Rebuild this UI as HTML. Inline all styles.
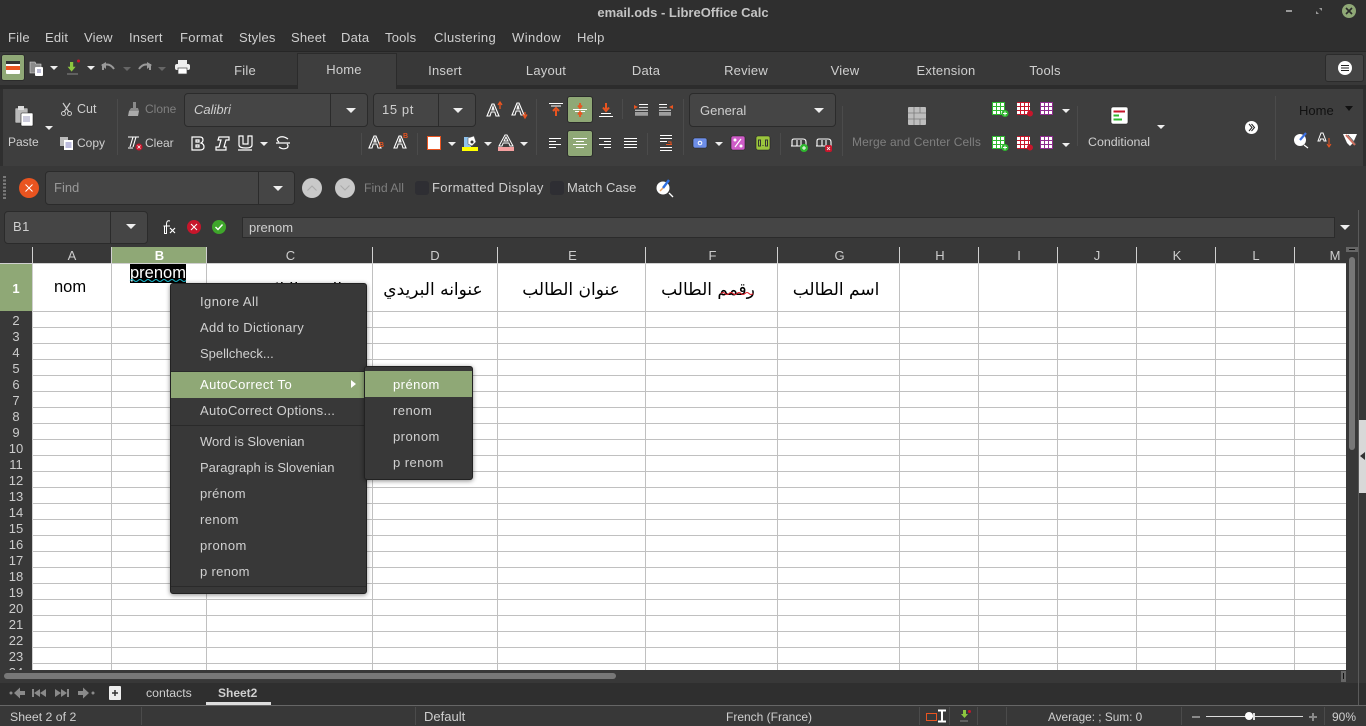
<!DOCTYPE html>
<html lang="fr"><head><meta charset="utf-8"><title>email.ods - LibreOffice Calc</title>
<style>
html,body{margin:0;padding:0;width:1366px;height:726px;overflow:hidden;background:#2f2f2f}
body{position:relative;font-family:"Liberation Sans","DejaVu Sans",sans-serif;font-size:13px;color:#cfcfcf}
.a{position:absolute}
.t{position:absolute;white-space:nowrap;line-height:16px}
.c{transform:translateX(-50%)}
.dim{color:#7f7f7f}
.sep{position:absolute;width:1px;background:#4b4b4b}
.box{position:absolute;box-sizing:border-box;background:#454545;border:1px solid #2b2b2b;border-radius:4px}
.div{position:absolute;top:0;bottom:0;width:1px;background:#2b2b2b}
.ar{position:absolute;width:0;height:0;border-left:5px solid transparent;border-right:5px solid transparent;border-top:5px solid #eee}
.ard{position:absolute;width:0;height:0;border-left:4px solid transparent;border-right:4px solid transparent;border-top:4px solid #666}
.grn{position:absolute;box-sizing:border-box;background:#8fa876;border:1px solid #2b2b2b;border-radius:3px}
svg{position:absolute;overflow:visible}
.m{letter-spacing:.2px}
.s{font-size:12.3px}
.ch{position:absolute;top:248px;height:15px;line-height:15px;text-align:center;color:#ccc;font-size:13px}
.cs{position:absolute;top:247px;height:16px;width:1px;background:#d0d0d0}
.rh{position:absolute;left:0;width:32px;text-align:center;color:#ccc;font-size:13px;line-height:15px;height:15px}
.cl{position:absolute;top:264px;height:406px;width:1px;background:#c0c0c0}
.ct{position:absolute;white-space:nowrap;color:#000;font-size:17px;line-height:24px;top:278px;font-family:"DejaVu Sans",sans-serif;direction:rtl;transform:translateX(-50%)}
.mi{position:absolute;left:29px;white-space:nowrap;line-height:16px;color:#d0d0d0;letter-spacing:.3px}
.ms{position:absolute;left:28px;white-space:nowrap;line-height:16px;color:#d0d0d0;letter-spacing:.45px}
</style></head><body>

<!-- Title / menu -->
<div class="a" style="left:0;top:0;width:1366px;height:51px;background:#2f2f2f"></div>
<div class="t c" style="left:683px;top:5px;font-weight:bold;color:#c4c4c4;font-size:13px">email.ods - LibreOffice Calc</div>
<div class="a" style="left:1286px;top:10px;width:6px;height:2px;background:#9a9a9a"></div>
<svg style="left:1316px;top:8px" width="7" height="7"><path d="M3 0H6V3ZM0 3L3 6H0Z" fill="#9a9a9a"/></svg>
<div class="a" style="left:1342px;top:4px;width:14px;height:14px;border-radius:50%;background:#8fa876"></div>
<svg style="left:1346px;top:8px" width="6" height="6"><path d="M0 0L6 6M6 0L0 6" stroke="#2a2a2a" stroke-width="1.600"/></svg>

<div class="t m" style="left:8px;top:30px">File</div>
<div class="t m" style="left:45px;top:30px">Edit</div>
<div class="t m" style="left:84px;top:30px">View</div>
<div class="t m" style="left:129px;top:30px">Insert</div>
<div class="t m" style="left:180px;top:30px;letter-spacing:.35px">Format</div>
<div class="t m" style="left:239px;top:30px">Styles</div>
<div class="t m" style="left:291px;top:30px">Sheet</div>
<div class="t m" style="left:341px;top:30px">Data</div>
<div class="t m" style="left:385px;top:30px">Tools</div>
<div class="t m" style="left:434px;top:30px;letter-spacing:.35px">Clustering</div>
<div class="t m" style="left:512px;top:30px;letter-spacing:.45px">Window</div>
<div class="t m" style="left:577px;top:30px">Help</div>

<!-- Tab bar -->
<div class="a" style="left:0;top:51px;width:1366px;height:1px;background:#262626"></div>
<div class="a" style="left:0;top:52px;width:1366px;height:33px;background:#383838"></div>
<div class="a" style="left:0;top:85px;width:1366px;height:4px;background:#2c2c2c"></div>
<div class="a" style="left:297px;top:53px;width:100px;height:36px;background:#3e3e3e;border:1px solid #2b2b2b;border-bottom:0;box-sizing:border-box"></div>
<div class="t c m" style="left:245px;top:63px">File</div>
<div class="t c m" style="left:344px;top:62px">Home</div>
<div class="t c m" style="left:445px;top:63px">Insert</div>
<div class="t c m" style="left:546px;top:63px">Layout</div>
<div class="t c m" style="left:646px;top:63px">Data</div>
<div class="t c m" style="left:746px;top:63px">Review</div>
<div class="t c m" style="left:845px;top:63px">View</div>
<div class="t c m" style="left:946px;top:63px">Extension</div>
<div class="t c m" style="left:1045px;top:63px">Tools</div>
<div class="a" style="left:1325px;top:54px;width:39px;height:28px;box-sizing:border-box;background:#454545;border:1px solid #2b2b2b;border-radius:3px"></div>
<div class="a" style="left:1338px;top:61px;width:14px;height:14px;border-radius:50%;background:#fff"></div>
<svg style="left:1341px;top:65px" width="8" height="6"><path d="M0 .5H8M0 3H8M0 5.500H8" stroke="#222" stroke-width="1"/></svg>

<!-- Quick toolbar -->
<div class="grn" style="left:1px;top:54px;width:24px;height:27px"></div>
<svg style="left:6px;top:61px" width="14" height="13"><rect width="14" height="13" rx="1" fill="#fff"/><rect width="14" height="3" fill="#333"/><rect y="5" width="14" height="4" fill="#e95420"/></svg>
<svg style="left:29px;top:61px" width="15" height="15"><path d="M1 1H6L7 3H12V12H1Z" fill="#8a8a8a" stroke="#ddd" stroke-width=".6"/><rect x="6" y="6" width="8" height="9" rx="1" fill="#fff"/><path d="M8 9H12M8 11H12" stroke="#77a" /></svg>
<div class="ar" style="left:50px;top:66px;border-left-width:4px;border-right-width:4px;border-top-width:4px"></div>
<svg style="left:66px;top:60px" width="16" height="16"><path d="M5 0H9V6H12L7 12L2 6H5Z" fill="#8cc63f" transform="translate(0,2) scale(.8)"/><path d="M1 14H12" stroke="#888"/><circle cx="12.500" cy="1" r="1.500" fill="#c7162b"/></svg>
<div class="ar" style="left:87px;top:66px;border-left-width:4px;border-right-width:4px;border-top-width:4px"></div>
<svg style="left:101px;top:62px" width="15" height="10"><path d="M2 8V3H3Q9 1 13 7" fill="none" stroke="#9a9a9a" stroke-width="2"/><path d="M0 3L5 0V7Z" fill="#9a9a9a"/></svg>
<div class="ard" style="left:123px;top:67px"></div>
<svg style="left:137px;top:62px" width="15" height="10"><path d="M13 8V3H12Q6 1 2 7" fill="none" stroke="#9a9a9a" stroke-width="2"/><path d="M15 3L10 0V7Z" fill="#9a9a9a"/></svg>
<div class="ard" style="left:158px;top:67px"></div>
<svg style="left:175px;top:60px" width="15" height="14"><rect x="3" y="0" width="9" height="4" fill="#eee"/><rect x="0" y="4" width="15" height="6" rx="2" fill="#eee"/><rect x="3" y="8" width="9" height="6" fill="#fff" stroke="#444" stroke-width=".7"/></svg>

<!-- Ribbon -->
<div class="a" style="left:3px;top:89px;width:1360px;height:77px;background:#3e3e3e"></div>
<svg style="left:15px;top:106px" width="18" height="20"><rect x="0" y="2" width="13" height="15" rx="1" fill="#bbb" stroke="#333" stroke-width=".6"/><rect x="3" y="0" width="6" height="4" fill="#ddd"/><rect x="6" y="7" width="12" height="13" rx="1" fill="#fff" stroke="#222" stroke-width=".6"/><path d="M8 11H15M8 13H15M8 15H15" stroke="#99b" /></svg>
<div class="ar" style="left:45px;top:126px;border-left-width:4px;border-right-width:4px;border-top-width:4px"></div>
<div class="t" style="left:8px;top:134px;font-size:12px">Paste</div>
<svg style="left:61px;top:103px" width="11" height="13"><path d="M2 0L8 9M9 0L3 9" stroke="#ccc" stroke-width="1.200"/><circle cx="2.500" cy="10.500" r="2" fill="none" stroke="#ccc"/><circle cx="8.500" cy="10.500" r="2" fill="none" stroke="#ccc"/></svg>
<div class="t" style="left:77px;top:101px;font-size:12.500px">Cut</div>
<svg style="left:60px;top:137px" width="13" height="13"><rect x="0" y="0" width="8" height="9" fill="#bbb"/><rect x="4" y="3" width="9" height="10" fill="#fff"/><path d="M5.500 6H11.500M5.500 8H11.500M5.500 10H11.500" stroke="#77b"/></svg>
<div class="t" style="left:77px;top:135px;font-size:12px">Copy</div>
<div class="sep" style="left:117px;top:99px;height:56px"></div>
<svg style="left:128px;top:102px" width="12" height="15"><path d="M5 0H8V6H10L11 9H1L3 6H5Z" fill="#8a8a8a"/><path d="M1 9H11L10 14H0Z" fill="#aaa"/></svg>
<div class="t dim" style="left:145px;top:101px;font-size:12px">Clone</div>
<svg style="left:127px;top:136px" width="16" height="15"><path d="M1 1H12M6 1L3 11M1 12H6M9 1L6 11" fill="none" stroke="#fff" stroke-width="1.100"/><circle cx="12" cy="11" r="3.500" fill="#c7162b"/><path d="M10.500 9.500L13.500 12.500M13.500 9.500L10.500 12.500" stroke="#fff" stroke-width=".8"/></svg>
<div class="t" style="left:145px;top:135px;font-size:12px">Clear</div>

<div class="box" style="left:184px;top:93px;width:184px;height:34px"><div class="div" style="left:145px"></div></div>
<div class="t" style="left:194px;top:102px;font-style:italic">Calibri</div>
<div class="ar" style="left:346px;top:108px"></div>
<div class="box" style="left:373px;top:93px;width:103px;height:34px"><div class="div" style="left:64px"></div></div>
<div class="t" style="left:382px;top:102px;letter-spacing:.6px">15 pt</div>
<div class="ar" style="left:453px;top:108px"></div>

<svg style="left:191px;top:136px" width="100" height="15" fill="none" stroke="#fff" stroke-width="1.200">
<path d="M1 1H9Q12 1 12 4Q12 6 10 7Q13 8 13 11Q13 14 9 14H1ZM5 4V6H8V4ZM5 9V11H8V9Z"/>
<path d="M28 1H38V4H35L33 11H35V14H25V11H28L30 4H27Z"/>
<path d="M48 0H52V8H57V0H61V9Q61 12 55 12Q48 12 48 9ZM47 14H61"/>
<path d="M97 3Q93 0 89 1Q84 3 88 6M88 11Q92 14 96 12Q98 10 96 8M85 7H99"/>
</svg>
<div class="ar" style="left:260px;top:142px;border-left-width:4px;border-right-width:4px;border-top-width:4px"></div>
<div class="sep" style="left:361px;top:133px;height:22px"></div>
<svg style="left:368px;top:135px" width="42" height="17" fill="none" stroke="#fff" stroke-width="1.100"><path d="M1 13L6 1H8L13 13H10L8.800 9H5.200L4 13ZM6 7H8L7 3.500Z"/><path d="M26 13L31 1H33L38 13H35L33.800 9H30.200L29 13ZM31 7H33L32 3.500Z"/></svg>
<div class="t" style="left:379px;top:142px;font-size:7px;line-height:8px;color:#e95420;font-weight:bold">B</div>
<div class="t" style="left:403px;top:133px;font-size:7px;line-height:8px;color:#e95420;font-weight:bold">B</div>
<div class="sep" style="left:417px;top:133px;height:22px"></div>
<div class="a" style="left:427px;top:136px;width:14px;height:14px;box-sizing:border-box;background:#fff;border:1px solid #e95420;outline:0"></div>
<div class="ar" style="left:448px;top:142px;border-left-width:4px;border-right-width:4px;border-top-width:4px"></div>
<svg style="left:462px;top:136px" width="16" height="15"><rect x="2" y="1" width="7" height="10" fill="#8fc3ee"/><path d="M6 2L12 0L14 6L10 10L6 8Z" fill="#fff" stroke="#555" stroke-width=".6"/><circle cx="10" cy="6" r="1.500" fill="#333"/><rect y="11" width="16" height="4" fill="#ffff00"/></svg>
<div class="ar" style="left:484px;top:142px;border-left-width:4px;border-right-width:4px;border-top-width:4px"></div>
<svg style="left:498px;top:135px" width="16" height="16"><path d="M1 11L7 0H9L15 11H12L10.800 8H5.200L4 11ZM6 6H10L8 2Z" fill="none" stroke="#fff" stroke-width="1"/><rect y="12" width="16" height="4" fill="#f4a0a0"/></svg>
<div class="ar" style="left:520px;top:142px;border-left-width:4px;border-right-width:4px;border-top-width:4px"></div>

<svg style="left:487px;top:101px" width="42" height="17" fill="none" stroke="#fff" stroke-width="1.100"><path d="M0 15L5 3H7L12 15H9L7.800 11H4.200L3 15ZM5 9H7L6 5.500Z"/><path d="M25 14L30 2H32L37 14H34L32.800 10H29.200L28 14ZM30 8H32L31 4.500Z"/><path d="M13 8V2M11 4L13 1L15 4" stroke="#e95420" stroke-width="1.300"/><path d="M38 11V16M36 13.500L38 17L40 13.500" stroke="#e95420" stroke-width="1.300"/></svg>
<div class="sep" style="left:536px;top:99px;height:56px"></div>

<svg style="left:548px;top:103px" width="16" height="14"><path d="M1 .5H15M3 3H13" stroke="#fff"/><path d="M8 13V7M5 8L8 5L11 8" stroke="#e95420" stroke-width="2" fill="none"/></svg>
<div class="grn" style="left:567px;top:96px;width:26px;height:27px"></div>
<svg style="left:572px;top:102px" width="16" height="16"><path d="M1 7.500H15M3 9.500H13" stroke="#fff"/><path d="M8 1V5M6 3.500L8 6L10 3.500M8 15V11M6 12.500L8 10L10 12.500" stroke="#e95420" stroke-width="1.800" fill="none"/></svg>
<svg style="left:598px;top:102px" width="16" height="15"><path d="M8 1V7M5 5.500L8 9L11 5.500" stroke="#e95420" stroke-width="2" fill="none"/><path d="M3 11.500H13M1 14.500H15" stroke="#fff"/></svg>

<svg style="left:634px;top:104px" width="40" height="12"><path d="M5 .5H14M5 3.500H14M1 6.500H14M1 9.500H14M1 11.500H14" stroke="#fff" transform="scale(1,.95)"/><path d="M0 1L4 3L0 5Z" fill="#e95420"/><path d="M25 .5H33M25 3.500H33M25 6.500H37M25 9.500H37M25 11.500H37" stroke="#fff" transform="scale(1,.95)"/><path d="M39 1L35 3L39 5Z" fill="#e95420"/></svg>
<div class="sep" style="left:622px;top:99px;height:20px"></div>
<div class="sep" style="left:683px;top:99px;height:56px"></div>

<svg style="left:549px;top:138px" width="13" height="11"><path d="M0 .5H12M0 3.500H7M0 6.500H12M0 9.500H7" stroke="#fff" /></svg>
<div class="grn" style="left:567px;top:130px;width:26px;height:27px"></div>
<svg style="left:573px;top:138px" width="14" height="11"><path d="M0 .5H14M3 3.500H11M0 6.500H14M3 9.500H11" stroke="#fff"/></svg>
<svg style="left:598px;top:138px" width="13" height="11"><path d="M1 .5H13M6 3.500H13M1 6.500H13M6 9.500H13" stroke="#fff"/></svg>
<svg style="left:624px;top:138px" width="13" height="11"><path d="M0 .5H13M0 3.500H13M0 6.500H13M0 9.500H13" stroke="#fff"/></svg>
<div class="sep" style="left:647px;top:133px;height:22px"></div>
<svg style="left:659px;top:135px" width="14" height="16"><path d="M1 .5H13M1 3.500H13M1 6.500H8M1 12.500H13M1 15.500H13" stroke="#fff"/><path d="M9 7H12V9.500M7 9.500H13" stroke="#e95420" fill="none"/></svg>

<div class="box" style="left:689px;top:93px;width:147px;height:34px"></div>
<div class="t" style="left:700px;top:103px">General</div>
<div class="ar" style="left:814px;top:108px"></div>
<svg style="left:693px;top:138px" width="14" height="10"><rect width="14" height="10" rx="2" fill="#6d8ee8" stroke="#222" stroke-width=".6"/><circle cx="7" cy="5" r="1.800" fill="none" stroke="#fff"/></svg>
<div class="ar" style="left:715px;top:142px;border-left-width:4px;border-right-width:4px;border-top-width:4px"></div>
<svg style="left:731px;top:136px" width="14" height="14"><rect width="14" height="14" rx="2" fill="#cf5cc8" stroke="#222" stroke-width=".6"/><path d="M10 3L4 11" stroke="#fff" stroke-width="1.200"/><circle cx="4" cy="4" r="1.500" fill="#fff"/><circle cx="10" cy="10" r="1.500" fill="#fff"/></svg>
<svg style="left:756px;top:136px" width="14" height="14"><rect width="14" height="14" rx="2" fill="#9bc53d" stroke="#222" stroke-width=".6"/><path d="M2.500 4H4.500V10H2.500ZM9.500 4H11.500V10H9.500Z" fill="none" stroke="#333"/><rect x="6.500" y="9" width="1" height="1" fill="#333"/></svg>
<div class="sep" style="left:780px;top:133px;height:22px"></div>
<svg style="left:791px;top:137px" width="42" height="15"><g fill="none" stroke="#fff" stroke-width="1.100"><path d="M1 9V4Q1 2 3 2H12Q15 2 15 5V9M0 9H16M6 3V9M10 3V9"/><path d="M26 9V4Q26 2 28 2H37Q40 2 40 5V9M25 9H41M31 3V9M35 3V9"/></g><circle cx="13" cy="11" r="4" fill="#2eb82e"/><path d="M11 11H15M13 9V13" stroke="#fff"/><rect x="34" y="8" width="7" height="7" rx="2" fill="#c7162b"/><path d="M36 10L39 13M39 10L36 13" stroke="#fff" stroke-width=".8"/></svg>
<div class="sep" style="left:842px;top:106px;height:50px"></div>
<svg style="left:908px;top:107px" width="18" height="18"><rect width="18" height="18" rx="1" fill="#bdbdbd"/><path d="M0 6H18M0 12H18M6 0V6M12 0V6M6 12V18M12 12V18M6 6V12" stroke="#7a7a7a" stroke-width=".8"/></svg>
<div class="t dim" style="left:852px;top:134px;font-size:12px;letter-spacing:.1px">Merge and Center Cells</div>

<svg width="0" height="0"><defs>
<pattern id="gw" width="4" height="4" patternUnits="userSpaceOnUse"><rect x="1" y="1" width="3" height="3" fill="#fff"/></pattern>
</defs></svg>
<svg style="left:992px;top:102px" width="62" height="15"><rect width="13" height="13" fill="#2eb82e"/><rect width="13" height="13" fill="url(#gw)"/><circle cx="13" cy="11.500" r="3.500" fill="#2eb82e"/><path d="M11 11.500H15M13 9.500V13.500" stroke="#fff"/><rect x="25" width="13" height="13" fill="#c7162b"/><rect x="25" width="13" height="13" fill="url(#gw)"/><circle cx="38" cy="11.500" r="3" fill="#c7162b"/><rect x="48" width="13" height="13" fill="#8e2c8e"/><rect x="48" width="13" height="13" fill="url(#gw)"/></svg>
<svg style="left:992px;top:136px" width="62" height="15"><rect width="13" height="13" fill="#2eb82e"/><rect width="13" height="13" fill="url(#gw)"/><circle cx="13" cy="11.500" r="3.500" fill="#2eb82e"/><path d="M11 11.500H15M13 9.500V13.500" stroke="#fff"/><rect x="25" width="13" height="13" fill="#c7162b"/><rect x="25" width="13" height="13" fill="url(#gw)"/><circle cx="38" cy="11.500" r="3" fill="#c7162b"/><rect x="48" width="13" height="13" fill="#8e2c8e"/><rect x="48" width="13" height="13" fill="url(#gw)"/></svg>
<div class="ar" style="left:1062px;top:109px;border-left-width:4px;border-right-width:4px;border-top-width:4px"></div>
<div class="ar" style="left:1062px;top:143px;border-left-width:4px;border-right-width:4px;border-top-width:4px"></div>
<div class="sep" style="left:1077px;top:106px;height:40px"></div>
<svg style="left:1111px;top:107px" width="17" height="17"><rect width="17" height="17" rx="2" fill="#fff" stroke="#222" stroke-width=".6"/><path d="M2.500 4.500H14" stroke="#c7162b" stroke-width="2"/><path d="M2.500 8.500H8M2.500 12.500H11" stroke="#2eb82e" stroke-width="2"/></svg>
<div class="t" style="left:1088px;top:134px;font-size:12.400px">Conditional</div>
<div class="ar" style="left:1157px;top:125px;border-left-width:4px;border-right-width:4px;border-top-width:4px"></div>
<div class="a" style="left:1245px;top:121px;width:13px;height:13px;border-radius:50%;background:#fff"></div>
<svg style="left:1248px;top:124px" width="7" height="7"><path d="M1 0L4 3.500L1 7M3.500 0L6.500 3.500L3.500 7" fill="none" stroke="#222"/></svg>
<div class="sep" style="left:1275px;top:96px;height:64px"></div>
<div class="t" style="left:1299px;top:103px;color:#111">Home</div>
<div class="a" style="left:1345px;top:106px;width:0;height:0;border-left:4px solid transparent;border-right:4px solid transparent;border-top:5px solid #111"></div>
<svg style="left:1293px;top:132px" width="16" height="16"><circle cx="7" cy="8" r="6" fill="#fff"/><path d="M13 1L7 8" stroke="#3b6fe0" stroke-width="2.200"/><path d="M11 13L15 16" stroke="#fff" stroke-width="1.200"/></svg>
<svg style="left:1317px;top:132px" width="15" height="16"><path d="M1 9L4 1H6L9 9H7L6.500 7H3.500L3 9Z" fill="none" stroke="#fff"/><path d="M12 6V14M10 12L12 15L14 12" stroke="#e95420" fill="none"/></svg>
<svg style="left:1343px;top:133px" width="15" height="14"><path d="M0 1H14L10 10L7 13L4 10Z" fill="#fff"/><path d="M3 2L12 12" stroke="#d07060" stroke-width="2"/><path d="M5 2L13 11" stroke="#555" stroke-width=".8"/></svg>

<!-- Find bar -->
<div class="a" style="left:0;top:166px;width:1366px;height:44px;background:#383838"></div>
<svg style="left:3px;top:176px" width="3" height="24"><path d="M1.500 0V24" stroke="#7a7a7a" stroke-width="3" stroke-dasharray="2 1.500"/></svg>
<div class="a" style="left:19px;top:178px;width:20px;height:20px;border-radius:50%;background:#e95420"></div>
<svg style="left:25px;top:184px" width="8" height="8"><path d="M.5 .5L7.500 7.500M7.500 .5L.5 7.500" stroke="#fff"/></svg>
<div class="box" style="left:45px;top:171px;width:250px;height:34px"><div class="div" style="left:212px"></div></div>
<div class="t" style="left:54px;top:180px;color:#999">Find</div>
<div class="ar" style="left:273px;top:186px"></div>
<div class="a" style="left:302px;top:178px;width:20px;height:20px;border-radius:50%;background:#c9c9c9"></div>
<svg style="left:307px;top:185px" width="10" height="6"><path d="M.5 5.500L5 1L9.500 5.500" fill="none" stroke="#aaa"/></svg>
<div class="a" style="left:335px;top:178px;width:20px;height:20px;border-radius:50%;background:#c9c9c9"></div>
<svg style="left:340px;top:185px" width="10" height="6"><path d="M.5 .5L5 5L9.500 .5" fill="none" stroke="#aaa"/></svg>
<div class="t dim" style="left:364px;top:180px;font-size:12.200px">Find All</div>
<div class="a" style="left:415px;top:181px;width:14px;height:14px;border-radius:3px;background:#2e2e33"></div>
<div class="t" style="left:432px;top:180px;letter-spacing:.37px">Formatted Display</div>
<div class="a" style="left:550px;top:181px;width:14px;height:14px;border-radius:3px;background:#2e2e33"></div>
<div class="t" style="left:567px;top:180px">Match Case</div>
<svg style="left:656px;top:179px" width="20" height="19"><circle cx="7" cy="9" r="6.500" fill="#fff"/><path d="M13 1L7 9" stroke="#2f6fe0" stroke-width="2.400"/><path d="M7 9L4 12" stroke="#e8a060" stroke-width="1.500"/><path d="M13 14L17 18" stroke="#fff" stroke-width="1.300"/></svg>

<!-- Formula bar -->
<div class="a" style="left:0;top:210px;width:1366px;height:37px;background:#383838"></div>
<div class="box" style="left:4px;top:211px;width:144px;height:33px"><div class="div" style="left:105px"></div></div>
<div class="t" style="left:13px;top:219px;letter-spacing:.5px">B1</div>
<div class="ar" style="left:126px;top:224px"></div>
<svg style="left:163px;top:220px" width="14" height="15" fill="none" stroke="#fff" stroke-width="1"><path d="M7 1Q3.500 0 3.500 4V13.500H1.500V6H0.500M1 6H7"/><path d="M7 8L12 13M12 8L7 13" stroke-width="1.200"/></svg>
<div class="a" style="left:187px;top:220px;width:14px;height:14px;border-radius:50%;background:#c7162b"></div>
<svg style="left:191px;top:224px" width="6" height="6"><path d="M0 0L6 6M6 0L0 6" stroke="#fff"/></svg>
<div class="a" style="left:212px;top:220px;width:14px;height:14px;border-radius:50%;background:#3fa62b"></div>
<svg style="left:215px;top:224px" width="8" height="6"><path d="M.5 3L3 5.500L7.500 .5" fill="none" stroke="#fff" stroke-width="1.400"/></svg>
<div class="a" style="left:242px;top:217px;width:1093px;height:21px;box-sizing:border-box;background:#454545;border:1px solid #2b2b2b"></div>
<div class="t" style="left:249px;top:220px">prenom</div>
<div class="ar" style="left:1340px;top:225px"></div>

<!-- Grid -->
<div class="a" style="left:0;top:247px;width:1366px;height:436px;background:#383838"></div>
<div class="a" style="left:33px;top:264px;width:1313px;height:406px;background:#fff"></div>
<div class="a" style="left:33px;top:311px;width:1313px;height:1px;background:#c0c0c0"></div>
<div class="a" style="left:33px;top:312px;width:1313px;height:358px;background:repeating-linear-gradient(to bottom,transparent 0,transparent 15px,#c0c0c0 15px,#c0c0c0 16px)"></div>
<div class="cl" style="left:111px"></div><div class="cl" style="left:206px"></div><div class="cl" style="left:372px"></div><div class="cl" style="left:497px"></div><div class="cl" style="left:645px"></div><div class="cl" style="left:777px"></div><div class="cl" style="left:899px"></div><div class="cl" style="left:978px"></div><div class="cl" style="left:1057px"></div><div class="cl" style="left:1136px"></div><div class="cl" style="left:1215px"></div><div class="cl" style="left:1294px"></div>

<div class="a" style="left:111px;top:247px;width:96px;height:16px;background:#8fa876"></div>
<div class="a" style="left:0;top:264px;width:33px;height:47px;background:#8fa876"></div>
<div class="a" style="left:0;top:263px;width:1346px;height:1px;background:#d0d0d0"></div>
<div class="cs" style="left:32px"></div><div class="cs" style="left:111px"></div><div class="cs" style="left:206px"></div><div class="cs" style="left:372px"></div><div class="cs" style="left:497px"></div><div class="cs" style="left:645px"></div><div class="cs" style="left:777px"></div><div class="cs" style="left:899px"></div><div class="cs" style="left:978px"></div><div class="cs" style="left:1057px"></div><div class="cs" style="left:1136px"></div><div class="cs" style="left:1215px"></div><div class="cs" style="left:1294px"></div>
<div class="ch" style="left:33px;width:78px">A</div>
<div class="ch" style="left:112px;width:95px;color:#fff;font-weight:bold">B</div>
<div class="ch" style="left:208px;width:165px">C</div>
<div class="ch" style="left:373px;width:124px">D</div>
<div class="ch" style="left:499px;width:147px">E</div>
<div class="ch" style="left:647px;width:131px">F</div>
<div class="ch" style="left:779px;width:121px">G</div>
<div class="ch" style="left:901px;width:78px">H</div>
<div class="ch" style="left:980px;width:78px">I</div>
<div class="ch" style="left:1058px;width:78px">J</div>
<div class="ch" style="left:1138px;width:78px">K</div>
<div class="ch" style="left:1217px;width:78px">L</div>
<div class="ch" style="left:1296px;width:78px">M</div>
<div class="a" style="left:32px;top:264px;width:1px;height:406px;background:#d0d0d0"></div>

<div class="rh" style="top:281px;color:#fff;font-weight:bold">1</div>
<div class="rh" style="top:313px">2</div><div class="rh" style="top:329px">3</div><div class="rh" style="top:345px">4</div><div class="rh" style="top:361px">5</div><div class="rh" style="top:377px">6</div><div class="rh" style="top:393px">7</div><div class="rh" style="top:409px">8</div><div class="rh" style="top:425px">9</div><div class="rh" style="top:441px">10</div><div class="rh" style="top:457px">11</div><div class="rh" style="top:473px">12</div><div class="rh" style="top:489px">13</div><div class="rh" style="top:505px">14</div><div class="rh" style="top:521px">15</div><div class="rh" style="top:537px">16</div><div class="rh" style="top:553px">17</div><div class="rh" style="top:569px">18</div><div class="rh" style="top:585px">19</div><div class="rh" style="top:601px">20</div><div class="rh" style="top:617px">21</div><div class="rh" style="top:633px">22</div><div class="rh" style="top:649px">23</div>
<div class="a" style="left:0;top:665px;width:32px;height:5px;overflow:hidden;text-align:center;color:#ccc;line-height:15px">24</div>
<div class="a" style="left:0;top:670px;width:1346px;height:1px;background:#383838"></div>

<div class="t" style="left:54px;top:277px;font-size:16.500px;line-height:20px;color:#000">nom</div>
<div class="a" style="left:130px;top:264px;width:56px;height:19px;background:#000"></div>
<div class="t" style="left:130px;top:263px;font-size:16.500px;line-height:20px;color:#fff">prenom</div>
<svg style="left:130px;top:279px" width="56" height="3"><path d="M0 1.500Q2 -.5 4 1.500T8 1.500T12 1.500T16 1.500T20 1.500T24 1.500T28 1.500T32 1.500T36 1.500T40 1.500T44 1.500T48 1.500T52 1.500T56 1.500" fill="none" stroke="#19b6c9"/></svg>
<div class="ct" style="left:285px">البريد الالكتروني</div>
<div class="ct" style="left:433px">عنوانه البريدي</div>
<div class="ct" style="left:571px">عنوان الطالب</div>
<div class="ct" style="left:708px">رقمم الطالب</div>
<svg style="left:721px;top:292px" width="34" height="3"><path d="M0 1.500Q2 -.5 4 1.500T8 1.500T12 1.500T16 1.500T20 1.500T24 1.500T28 1.500T32 1.500" fill="none" stroke="#e0202a"/></svg>
<div class="ct" style="left:836px">اسم الطالب</div>

<!-- vertical scrollbar / sidebar -->
<div class="a" style="left:1346px;top:247px;width:12px;height:5px;background:#666"></div>
<div class="a" style="left:1349px;top:249px;width:6px;height:1px;background:#111"></div>
<div class="a" style="left:1349px;top:257px;width:6px;height:193px;border-radius:3px;background:#777"></div>
<div class="a" style="left:1358px;top:210px;width:1px;height:495px;background:#5a5a5a"></div>
<div class="a" style="left:1359px;top:420px;width:7px;height:73px;background:#d8d8d8"></div>
<div class="a" style="left:1360px;top:452px;width:0;height:0;border-top:4px solid transparent;border-bottom:4px solid transparent;border-right:5px solid #333"></div>

<!-- horizontal scrollbar -->
<div class="a" style="left:4px;top:673px;width:612px;height:6px;border-radius:3px;background:#777"></div>
<div class="a" style="left:1341px;top:671px;width:5px;height:11px;background:#666"></div>
<div class="a" style="left:1343px;top:673px;width:1px;height:6px;background:#111"></div>

<!-- sheet tabs -->
<svg style="left:9px;top:686px" width="88" height="14" fill="#8a8a8a"><circle cx="2" cy="7" r="1.500"/><path d="M5 7L11 1.500V5H16V9H11V12.500Z"/><rect x="23" y="3" width="2" height="8"/><path d="M25 7L31 3V11ZM31 7L37 3V11Z"/><path d="M46 3L52 7L46 11ZM52 3L58 7L52 11Z"/><rect x="58" y="3" width="2" height="8"/><path d="M80 7L74 1.500V5H69V9H74V12.500Z"/><circle cx="84" cy="7" r="1.500"/></svg>
<div class="a" style="left:109px;top:686px;width:12px;height:14px;background:#eee;border-radius:1px"></div>
<svg style="left:112px;top:690px" width="6" height="6"><path d="M3 0V6M0 3H6" stroke="#333" stroke-width="1.500"/></svg>
<div class="t" style="left:146px;top:685px;font-size:12.300px">contacts</div>
<div class="t" style="left:218px;top:685px;font-weight:bold;font-size:12px">Sheet2</div>
<div class="a" style="left:206px;top:702px;width:65px;height:3px;background:#ddd"></div>

<!-- status bar -->
<div class="a" style="left:0;top:705px;width:1366px;height:1px;background:#666"></div>
<div class="a" style="left:0;top:706px;width:1366px;height:20px;background:#383838"></div>
<div class="t s" style="left:10px;top:709px">Sheet 2 of 2</div>
<div class="sep" style="left:141px;top:707px;height:18px"></div>
<div class="sep" style="left:415px;top:707px;height:18px"></div>
<div class="t" style="left:424px;top:709px">Default</div>
<div class="t s" style="left:726px;top:709px;font-size:12px">French (France)</div>
<div class="sep" style="left:919px;top:707px;height:18px"></div>
<div class="a" style="left:926px;top:713px;width:9px;height:6px;border:1px solid #e95420"></div>
<svg style="left:938px;top:710px" width="8" height="12"><path d="M0 .5H8M0 11.500H8M4 .5V11.500" stroke="#fff" stroke-width="2"/></svg>
<div class="sep" style="left:949px;top:707px;height:18px"></div>
<svg style="left:960px;top:710px" width="13" height="12"><path d="M3 0H6V4H8L4.500 8L1 4H3Z" fill="#8cc63f"/><path d="M0 11H8" stroke="#888"/><circle cx="9.500" cy="1.500" r="1.500" fill="#c7162b"/></svg>
<div class="sep" style="left:977px;top:707px;height:18px"></div>
<div class="sep" style="left:1006px;top:707px;height:18px"></div>
<div class="t" style="left:1048px;top:709px;font-size:11.800px">Average: ; Sum: 0</div>
<div class="sep" style="left:1181px;top:707px;height:18px"></div>
<div class="a" style="left:1192px;top:716px;width:8px;height:2px;background:#8a8a8a"></div>
<div class="a" style="left:1206px;top:716px;width:97px;height:1px;background:#ddd"></div>
<div class="a" style="left:1253px;top:713px;width:2px;height:7px;background:#ddd"></div>
<div class="a" style="left:1245px;top:712px;width:8px;height:8px;border-radius:50%;background:#fff"></div>
<svg style="left:1309px;top:713px" width="8" height="8"><path d="M4 0V8M0 4H8" stroke="#8a8a8a" stroke-width="2"/></svg>
<div class="sep" style="left:1324px;top:707px;height:18px"></div>
<div class="t" style="left:1332px;top:709px;font-size:12px">90%</div>

<!-- Context menu -->
<div class="a" style="left:170px;top:283px;width:197px;height:311px;box-sizing:border-box;background:#383838;border:1px solid #222;border-radius:3px;box-shadow:0 1px 5px rgba(0,0,0,.45)">
<div class="mi" style="top:10px;letter-spacing:.45px">Ignore All</div>
<div class="mi" style="top:36px">Add to Dictionary</div>
<div class="mi" style="top:62px;letter-spacing:0">Spellcheck...</div>
<div class="a" style="left:0;top:87px;width:195px;height:1px;background:#2a2a2a"></div>
<div class="a" style="left:0;top:88px;width:195px;height:26px;background:#8fa876"></div>
<div class="mi" style="top:93px;color:#fff;letter-spacing:.4px">AutoCorrect To</div>
<div class="a" style="left:180px;top:96px;width:0;height:0;border-top:4px solid transparent;border-bottom:4px solid transparent;border-left:5px solid #fff"></div>
<div class="mi" style="top:119px;letter-spacing:.3px">AutoCorrect Options...</div>
<div class="a" style="left:0;top:141px;width:195px;height:1px;background:#2a2a2a"></div>
<div class="mi" style="top:150px;letter-spacing:0">Word is Slovenian</div>
<div class="mi" style="top:176px;letter-spacing:0">Paragraph is Slovenian</div>
<div class="mi" style="top:202px">prénom</div>
<div class="mi" style="top:228px;letter-spacing:.4px">renom</div>
<div class="mi" style="top:254px;letter-spacing:.45px">pronom</div>
<div class="mi" style="top:280px">p renom</div>
<div class="a" style="left:0;top:302px;width:195px;height:1px;background:#2a2a2a"></div>
</div>
<div class="a" style="left:364px;top:366px;width:109px;height:114px;box-sizing:border-box;background:#383838;border:1px solid #222;border-radius:3px;box-shadow:0 1px 5px rgba(0,0,0,.45)">
<div class="a" style="left:0;top:4px;width:107px;height:26px;background:#8fa876"></div>
<div class="ms" style="top:10px;color:#fff">prénom</div>
<div class="ms" style="top:36px">renom</div>
<div class="ms" style="top:62px">pronom</div>
<div class="ms" style="top:88px">p renom</div>
</div>

</body></html>
